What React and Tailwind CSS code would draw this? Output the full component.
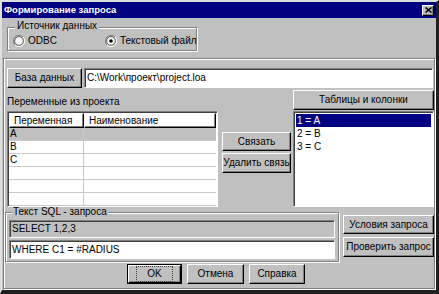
import React from 'react';

const raised = 'border border-t-white border-l-white border-r-[#000] border-b-[#000] shadow-[inset_-1px_-1px_0_#808080]';
const sunken = 'border border-t-[#808080] border-l-[#808080] border-r-white border-b-white shadow-[inset_1px_1px_0_#404040]';
const etched = 'border border-[#808080] shadow-[1px_1px_0_#fff,inset_1px_1px_0_#fff]';

const Button = ({ children, className = '' }) => (
    <div className={`${raised} bg-[#c0c0c0] flex items-center justify-center whitespace-nowrap text-[10px] leading-none text-black ${className}`}>
        {children}
    </div>
);

const Radio = ({ checked }) => (
    <svg width="12" height="12" viewBox="0 0 12 12">
        <path d="M10 2 A5.5 5.5 0 0 0 2 10" fill="none" stroke="#808080" strokeWidth="1" />
        <path d="M2 10 A5.5 5.5 0 0 0 10 2" fill="none" stroke="#fff" strokeWidth="1" />
        <circle cx="6" cy="6" r="4.3" fill="#fff" stroke="#404040" strokeWidth="0.8" />
        {checked && <circle cx="6" cy="6" r="1.8" fill="#000" />}
    </svg>
);

const App = () => {
    const rows = ['A', 'B', 'C', '', '', ''];
    const items = ['1 = A', '2 = B', '3 = C'];

    return (
        <div className="w-[439px] h-[294px] bg-[#c0c0c0] border-t-2 border-l-2 border-t-[#dfdfdf] border-l-[#dfdfdf] border-r-[3px] border-b-[4px] border-r-[#202020] border-b-[#202020] flex flex-col text-black font-['Liberation_Sans',Arial,sans-serif] overflow-hidden">
            {/* title bar */}
            <div className="h-[16px] bg-[#000080] flex items-center justify-between pl-[2px] pr-[2px]">
                <span className="text-white font-bold text-[9.5px] leading-none whitespace-nowrap">Формирование запроса</span>
                <div className={`${raised} w-[12px] h-[11px] bg-[#c0c0c0] flex items-center justify-center`}>
                    <svg width="7" height="6" viewBox="0 0 7 6">
                        <path d="M0.5 0.5 L6.5 5.5 M6.5 0.5 L0.5 5.5" stroke="#000" strokeWidth="1.6" />
                    </svg>
                </div>
            </div>

            {/* data source group */}
            <div className={`${etched} relative mt-[9px] ml-[5px] w-[190px] h-[24px] flex items-center`}>
                <span className="absolute -top-[7px] left-[7px] px-[2px] bg-[#c0c0c0] text-[10px] leading-none whitespace-nowrap">Источник данных</span>
                <div className="flex items-center ml-[5px] mt-[3px] gap-[3px] whitespace-nowrap">
                    <Radio />
                    <span className="text-[10px] leading-none">ODBC</span>
                </div>
                <div className="flex items-center ml-[48px] mt-[3px] gap-[3px] whitespace-nowrap">
                    <Radio checked />
                    <span className="text-[10px] leading-none">Текстовый файл</span>
                </div>
            </div>

            {/* main panel */}
            <div className={`${etched} mt-[7px] ml-[1px] w-[432px] h-[231px] pl-[1px] pt-[9px] flex flex-col`}>
                <div className="flex ml-[2px]">
                    <Button className="w-[75px] h-[20px]">База данных</Button>
                    <div className={`${sunken} ml-[2px] w-[349px] h-[20px] bg-white flex items-center pl-[2px] text-[10px] leading-none whitespace-nowrap`}>
                        C:\Work\проект\project.loa
                    </div>
                </div>

                <div className="flex ml-[2px] mt-[2px]">
                    <div className="w-[211px] flex flex-col">
                        <div className="h-[21px] flex items-center text-[10px] leading-none pt-[3px] whitespace-nowrap">Переменные из проекта</div>
                        <div className={`${sunken} h-[96px] bg-white flex flex-col overflow-hidden p-[1px]`}>
                            <div className="flex h-[15px] shrink-0">
                                <div className={`${raised} w-[75px] flex items-center pl-[4px] text-[10px] leading-none`}>Переменная</div>
                                <div className={`${raised} flex-1 flex items-center pl-[4px] text-[10px] leading-none`}>Наименование</div>
                            </div>
                            {rows.map((r, i) => (
                                <div key={i} className={`flex h-[13px] shrink-0 border-b border-[#c8c8c8] ${i === 0 ? 'bg-[#c0c0c0]' : 'bg-white'}`}>
                                    <div className="w-[75px] border-r border-[#c8c8c8] pl-[1px] text-[10px] leading-[12px]">{r}</div>
                                    <div className="flex-1" />
                                </div>
                            ))}
                        </div>
                    </div>

                    <div className="w-[69px] ml-[4px] pt-[42px] flex flex-col gap-[2px]">
                        <Button className="h-[19px]">Связать</Button>
                        <Button className="h-[20px]">Удалить связь</Button>
                    </div>

                    <div className="w-[141px] ml-[2px] flex flex-col">
                        <Button className="h-[20px]">Таблицы и колонки</Button>
                        <div className={`${sunken} mt-[1px] h-[96px] bg-white p-[2px] flex flex-col`}>
                            {items.map((it, i) => (
                                <div key={i} className={`h-[13px] pl-[1px] text-[10px] leading-[13px] ${i === 0 ? 'bg-[#000080] text-white' : ''}`}>{it}</div>
                            ))}
                        </div>
                    </div>
                </div>

                {/* sql */}
                <div className="flex mt-[5px]">
                    <div className={`${etched} relative w-[334px] h-[50px] pt-[7px] px-[3px] flex flex-col gap-[2px]`}>
                        <span className="absolute -top-[6px] left-[6px] px-[1px] bg-[#c0c0c0] text-[10px] leading-none whitespace-nowrap">Текст SQL - запроса</span>
                        <div className={`${sunken} h-[18px] bg-[#c0c0c0] flex items-center pl-[2px] text-[10px] leading-none`}>SELECT 1,2,3</div>
                        <div className={`${sunken} h-[19px] bg-white flex items-center pl-[2px] text-[10px] leading-none`}>WHERE C1 = #RADIUS</div>
                    </div>
                    <div className="ml-[4px] w-[91px] pt-[3px] flex flex-col gap-[3px]">
                        <Button className="h-[19px]">Условия запроса</Button>
                        <Button className="h-[20px]">Проверить запрос</Button>
                    </div>
                </div>

                <div className="flex mt-[2px] ml-[122px]">
                    <div className="w-[55px] h-[20px] border border-black">
                        <Button className="w-full h-full">
                            <span className="outline outline-1 outline-dotted outline-[#404040] px-[10px] py-[2px]">OK</span>
                        </Button>
                    </div>
                    <Button className="w-[57px] h-[20px] ml-[5px]">Отмена</Button>
                    <Button className="w-[56px] h-[20px] ml-[5px]">Справка</Button>
                </div>
            </div>
        </div>
    );
};

export default App;
